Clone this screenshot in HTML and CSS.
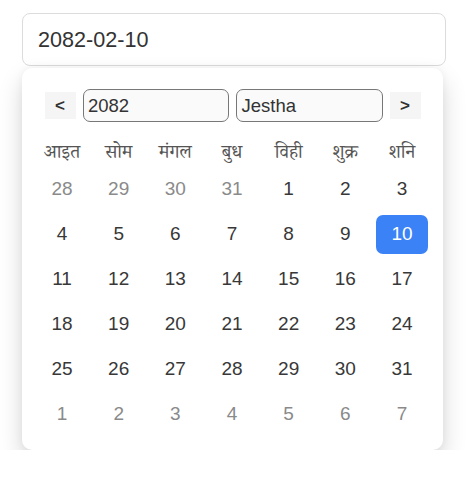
FILE: index.html
```html
<!DOCTYPE html>
<html>
<head>
<meta charset="utf-8">
<link rel="stylesheet" href="styles.css">
</head>
<body>
<div class="wrap">
  <div class="date-input">2082-02-10</div>
  <div class="popup">
    <div class="header">
      <button class="nav">&lt;</button>
      <div class="sel">2082</div>
      <div class="sel">Jestha</div>
      <button class="nav">&gt;</button>
    </div>
    <div class="weekdays">
      <span>आइत</span><span>सोम</span><span>मंगल</span><span>बुध</span><span>विही</span><span>शुक्र</span><span>शनि</span>
    </div>
    <div class="days">
      <span class="other">28</span><span class="other">29</span><span class="other">30</span><span class="other">31</span><span>1</span><span>2</span><span>3</span>
      <span>4</span><span>5</span><span>6</span><span>7</span><span>8</span><span>9</span><span class="selected">10</span>
      <span>11</span><span>12</span><span>13</span><span>14</span><span>15</span><span>16</span><span>17</span>
      <span>18</span><span>19</span><span>20</span><span>21</span><span>22</span><span>23</span><span>24</span>
      <span>25</span><span>26</span><span>27</span><span>28</span><span>29</span><span>30</span><span>31</span>
      <span class="other">1</span><span class="other">2</span><span class="other">3</span><span class="other">4</span><span class="other">5</span><span class="other">6</span><span class="other">7</span>
    </div>
  </div>
</div>
</body>
</html>
```
FILE: styles.css
```css
* { box-sizing: border-box; }
html, body { margin: 0; padding: 0; background: #fff; }
body { font-family: "Liberation Sans", Arial, sans-serif; color: #333; }

.wrap { padding: 13px 0 0 22px; }

.date-input {
  width: 424px;
  height: 53px;
  border: 1px solid #dcdcdc;
  border-radius: 8px;
  padding-left: 15px;
  display: flex;
  align-items: center;
  font-size: 21.6px;
  color: #333;
}

.popup {
  width: 421px;
  margin-top: 2px;
  background: #fff;
  border-radius: 10px;
  box-shadow: 0 12px 24px rgba(0,0,0,0.16), 0 0 8px rgba(0,0,0,0.05);
  padding: 21px 15.5px 16.5px 14.5px;
}

.header {
  display: flex;
  align-items: center;
  gap: 7px;
  margin-left: 8px;
  height: 33px;
  margin-bottom: 17.5px;
}

.nav {
  width: 31px;
  height: 27px;
  border: none;
  background: #f5f5f5;
  color: #333;
  font-family: "Liberation Sans", Arial, sans-serif;
  font-weight: bold;
  font-size: 17px;
  padding: 0;
  display: flex;
  align-items: center;
  justify-content: center;
}

.sel {
  width: 146.5px;
  height: 33px;
  border: 1px solid #777;
  border-radius: 7px;
  background: #fafafa;
  font-size: 18.5px;
  color: #333;
  padding-left: 4.5px;
  display: flex;
  align-items: center;
}

.weekdays {
  display: grid;
  grid-template-columns: repeat(7, 1fr);
  column-gap: 5.67px;
  height: 30px;
  align-items: center;
  text-align: center;
  font-family: "Noto Serif Devanagari", "Noto Sans Devanagari", "Lohit Devanagari", serif;
  font-size: 19px;
  color: #555;
}

.days {
  display: grid;
  grid-template-columns: repeat(7, 1fr);
  column-gap: 5.67px;
  row-gap: 6px;
}

.days span {
  height: 39px;
  display: flex;
  align-items: center;
  justify-content: center;
  font-size: 19px;
  color: #383838;
  border-radius: 7px;
}

.days span.other { color: #8a8a8a; }

.days span.selected {
  background: #3b82f6;
  color: #fff;
}
```
